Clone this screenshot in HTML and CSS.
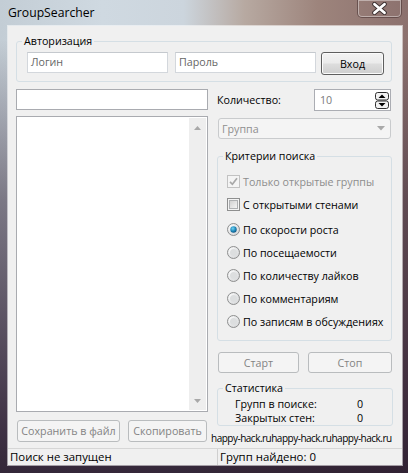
FILE: index.html
```html
<!DOCTYPE html>
<html lang="ru">
<head>
<meta charset="utf-8">
<title>GroupSearcher</title>
<link rel="stylesheet" href="styles.css">
</head>
<body>
<div class="window">
  <div class="titlebar">
    <span class="title">GroupSearcher</span>
    <div class="close">
      <svg width="15" height="13" viewBox="0 0 15 13"><path d="M2.5 2.2 L12.5 10.8 M12.5 2.2 L2.5 10.8" stroke="#3b3030" stroke-width="4.6" stroke-linecap="round"/><path d="M2.5 2.2 L12.5 10.8 M12.5 2.2 L2.5 10.8" stroke="#ffffff" stroke-width="2.8" stroke-linecap="round"/></svg>
    </div>
  </div>
  <div class="client">
    <div class="content">
      <fieldset class="group auth">
        <legend>Авторизация</legend>
        <div class="auth-row">
          <div class="edit light">Логин</div>
          <div class="edit light">Пароль</div>
          <div class="btn default">Вход</div>
        </div>
      </fieldset>
      <div class="main">
        <div class="left">
          <div class="edit search"></div>
          <div class="listbox">
            <div class="vscroll">
              <svg width="7" height="4" viewBox="0 0 7 4"><path d="M0 4 L3.5 0 L7 4 Z" fill="#a8a8a8"/></svg>
              <svg width="7" height="4" viewBox="0 0 7 4"><path d="M0 0 L3.5 4 L7 0 Z" fill="#a8a8a8"/></svg>
            </div>
          </div>
          <div class="btn-row">
            <div class="btn disabled save">Сохранить в файл</div>
            <div class="btn disabled copy">Скопировать</div>
          </div>
        </div>
        <div class="right">
          <div class="count-row">
            <span class="label">Количество:</span>
            <div class="spin">
              <span class="spin-value">10</span>
              <svg class="spin-btns" width="14" height="17" viewBox="0 0 14 17">
                <rect x="0.5" y="0.5" width="13" height="7.5" rx="2.2" fill="#f2f2f2" stroke="#2e2e2e"/>
                <path d="M3.5 6 L7 2.5 L10.5 6 Z" fill="#000"/>
                <rect x="0.5" y="9" width="13" height="7.5" rx="2.2" fill="#f2f2f2" stroke="#2e2e2e"/>
                <path d="M3.5 11 L7 14.5 L10.5 11 Z" fill="#000"/>
              </svg>
            </div>
          </div>
          <div class="combo">
            <span>Группа</span>
            <svg width="8" height="5" viewBox="0 0 8 5"><path d="M0 0 L4 4.5 L8 0 Z" fill="#a9a9a9"/></svg>
          </div>
          <fieldset class="group criteria">
            <legend>Критерии поиска</legend>
            <div class="opt disabled">
              <svg width="13" height="13" viewBox="0 0 13 13"><rect x="0.5" y="0.5" width="12" height="12" fill="#f4f4f4" stroke="#c2c2c2"/><path d="M3 6.8 L5.4 9.3 L10 3.2" fill="none" stroke="#a8a8a8" stroke-width="1.7"/></svg>
              <span>Только открытые группы</span>
            </div>
            <div class="opt">
              <svg width="13" height="13" viewBox="0 0 13 13"><defs><linearGradient id="cb" x1="0" y1="0" x2="1" y2="1"><stop offset="0" stop-color="#cfcfcf"/><stop offset="1" stop-color="#f6f6f6"/></linearGradient></defs><rect x="0.5" y="0.5" width="12" height="12" fill="#f4f4f4" stroke="#8e8f8f"/><rect x="2.5" y="2.5" width="8" height="8" fill="url(#cb)" stroke="#aeb0b2"/></svg>
              <span>С открытыми стенами</span>
            </div>
            <div class="opt radio-first">
              <svg width="13" height="13" viewBox="0 0 13 13"><defs><radialGradient id="rb" cx="0.35" cy="0.35" r="0.8"><stop offset="0" stop-color="#ffffff"/><stop offset="1" stop-color="#cfd1d3"/></radialGradient><radialGradient id="rd" cx="0.4" cy="0.35" r="0.7"><stop offset="0" stop-color="#72d3f4"/><stop offset="0.6" stop-color="#1c86b8"/><stop offset="1" stop-color="#0d4e7a"/></radialGradient></defs><circle cx="6.5" cy="6.5" r="6" fill="url(#rb)" stroke="#8e8f8f"/><circle cx="6.5" cy="6.5" r="3.2" fill="url(#rd)"/></svg>
              <span>По скорости роста</span>
            </div>
            <div class="opt">
              <svg width="13" height="13" viewBox="0 0 13 13"><circle cx="6.5" cy="6.5" r="6" fill="url(#rb)" stroke="#8e8f8f"/><circle cx="6.5" cy="6.5" r="3.5" fill="#dcdedf"/></svg>
              <span>По посещаемости</span>
            </div>
            <div class="opt">
              <svg width="13" height="13" viewBox="0 0 13 13"><circle cx="6.5" cy="6.5" r="6" fill="url(#rb)" stroke="#8e8f8f"/><circle cx="6.5" cy="6.5" r="3.5" fill="#dcdedf"/></svg>
              <span>По количеству лайков</span>
            </div>
            <div class="opt">
              <svg width="13" height="13" viewBox="0 0 13 13"><circle cx="6.5" cy="6.5" r="6" fill="url(#rb)" stroke="#8e8f8f"/><circle cx="6.5" cy="6.5" r="3.5" fill="#dcdedf"/></svg>
              <span>По комментариям</span>
            </div>
            <div class="opt">
              <svg width="13" height="13" viewBox="0 0 13 13"><circle cx="6.5" cy="6.5" r="6" fill="url(#rb)" stroke="#8e8f8f"/><circle cx="6.5" cy="6.5" r="3.5" fill="#dcdedf"/></svg>
              <span>По записям в обсуждениях</span>
            </div>
          </fieldset>
          <div class="run-row">
            <div class="btn disabled start">Старт</div>
            <div class="btn disabled stop">Стоп</div>
          </div>
          <fieldset class="group stats">
            <legend>Статистика</legend>
            <div class="stat-grid">
              <span>Групп в поиске:</span><span>0</span>
              <span>Закрытых стен:</span><span>0</span>
            </div>
          </fieldset>
          <div class="link">happy-hack.ruhappy-hack.ruhappy-hack.ru</div>
        </div>
      </div>
    </div>
    <div class="statusbar">
      <div class="panel first">Поиск не запущен</div>
      <div class="panel second">Групп найдено: 0</div>
    </div>
  </div>
</div>
</body>
</html>
```

FILE: styles.css
```css
* { box-sizing: border-box; }
html, body { margin: 0; padding: 0; }
body {
  width: 408px;
  height: 473px;
  overflow: hidden;
  font-family: "Open Sans", "Noto Sans", sans-serif;
  font-size: 10.7px;
  color: #111;
}
svg { flex-shrink: 0; }
.window {
  width: 408px;
  height: 473px;
  padding: 0 6px 8px 8px;
  display: flex;
  flex-direction: column;
  background:
    linear-gradient(to bottom, rgba(46,32,46,0) 0px, rgba(46,32,46,0) 40px, rgba(52,36,54,0.5) 200px, rgba(48,32,52,0.9) 430px, rgba(44,30,48,0.95) 473px),
    linear-gradient(to right, #c3cdd5 0%, #cfd9e1 25%, #ccd5dd 45%, #b7a9a1 60%, #9d847c 78%, #8c716e 100%);
}
.titlebar {
  height: 26px;
  display: flex;
  align-items: flex-start;
}
.title {
  padding-top: 5px;
  line-height: 16px;
  font-size: 12.2px;
  color: #000;
}
.close {
  margin-left: auto;
  width: 45px;
  height: 18px;
  border: 1px solid rgba(70,48,48,0.55);
  border-top: none;
  border-radius: 0 0 5px 5px;
  box-shadow: inset 0 0 0 1px rgba(255,255,255,0.4);
  display: flex;
  align-items: center;
  justify-content: center;
}
.client {
  height: 439px;
  background: #f0f0f0;
  display: flex;
  flex-direction: column;
  box-shadow: 0 0 0 1px rgba(255,255,255,0.55);
}
.content {
  height: 422px;
  padding: 8px 10px 0 8px;
}
fieldset.group {
  margin: 0;
  min-width: 0;
  border: 1px solid #d5dfe5;
  border-radius: 3px;
}
legend {
  padding: 0 2px;
  line-height: 14px;
  color: #000;
}
fieldset.auth {
  width: 376px;
  padding: 4px 7px 6px 10px;
}
.auth legend { margin-left: -5px; }
.auth-row {
  display: flex;
  align-items: flex-start;
}
.edit {
  height: 21px;
  background: #fff;
  border: 1px solid #abadb3;
  padding-left: 3px;
  line-height: 19px;
}
.edit.light {
  width: 141px;
  border-color: #d3d7dc;
  border-top-color: #c5c9ce;
  color: #666;
}
.edit.light + .edit.light { margin-left: 7px; }
.btn {
  height: 22px;
  border-radius: 3px;
  display: flex;
  align-items: center;
  justify-content: center;
  white-space: nowrap;
}
.btn.default {
  width: 63px;
  height: 23px;
  margin-left: 5px;
  border: 1px solid #5f5f5f;
  box-shadow: inset 0 0 0 1px #fbfbfb;
  background: linear-gradient(to bottom, #f3f3f3 0%, #ebebeb 48%, #dddddd 52%, #cfcfcf 100%);
  color: #000;
}
.btn.disabled {
  border: 1px solid #b9bcbe;
  background: #f4f4f4;
  color: #838383;
}
.main {
  margin-top: 7px;
  display: flex;
  gap: 9px;
}
.left {
  width: 192px;
  display: flex;
  flex-direction: column;
}
.search { width: 192px; border-color: #a9abb0; }
.listbox {
  margin-top: 6px;
  height: 296px;
  background: #fff;
  border: 1px solid #a9abb0;
  display: flex;
  justify-content: flex-end;
  padding: 1px;
}
.vscroll {
  width: 17px;
  background: #eeeeee;
  display: flex;
  flex-direction: column;
  justify-content: space-between;
  align-items: center;
  padding: 8px 0 7px;
}
.btn-row {
  margin-top: 8px;
  display: flex;
  gap: 8px;
  padding-left: 1px;
}
.save { width: 103px; }
.copy { width: 79px; }
.right {
  width: 175px;
  display: flex;
  flex-direction: column;
}
.count-row {
  height: 22px;
  display: flex;
  align-items: center;
}
.label { color: #000; }
.spin {
  margin-left: auto;
  margin-right: 1px;
  width: 77px;
  height: 22px;
  background: #fff;
  border: 1px solid #abadb3;
  display: flex;
  align-items: center;
  padding-left: 5px;
  padding-right: 1px;
}
.spin-value { color: #7a7a7a; }
.spin-btns { margin-left: auto; }
.combo {
  margin-top: 7px;
  margin-left: 1px;
  width: 173px;
  height: 21px;
  border: 1px solid #c9cbcd;
  border-radius: 3px;
  background: #f4f4f4;
  color: #8f8f8f;
  display: flex;
  align-items: center;
  justify-content: space-between;
  padding: 0 5px 0 3px;
}
fieldset.criteria {
  margin-top: 10px;
  width: 175px;
  padding: 7px 4px 7px 9px;
}
.criteria legend { margin-left: -4px; }
.opt {
  height: 23px;
  display: flex;
  align-items: center;
  gap: 3px;
  color: #000;
  white-space: nowrap;
}
.opt.disabled { color: #8d8d8d; }
.radio-first { margin-top: 2px; }
.run-row {
  margin-top: 11px;
  display: flex;
  gap: 9px;
  padding-left: 1px;
}
.run-row .btn { height: 21px; }
.start { width: 81px; }
.stop { width: 84px; }
fieldset.stats {
  margin-top: 8px;
  width: 176px;
  padding: 2px 4px 0 8px;
}
.stats legend { margin-left: -3px; }
.stat-grid {
  display: grid;
  grid-template-columns: 122px auto;
  padding-left: 9px;
  line-height: 14px;
  color: #000;
}
.link {
  margin-top: 5px;
  margin-left: -6px;
  line-height: 14px;
  font-size: 10px;
  letter-spacing: -0.5px;
  white-space: nowrap;
  color: #000;
}
.statusbar {
  height: 17px;
  border-top: 1px solid #d6d6d6;
  display: flex;
  color: #000;
  font-size: 11.4px;
  line-height: 16px;
}
.panel.first { width: 209px; padding-left: 2px; }
.panel.second { border-left: 1px solid #cfcfcf; padding-left: 2px; flex: 1; }
```
